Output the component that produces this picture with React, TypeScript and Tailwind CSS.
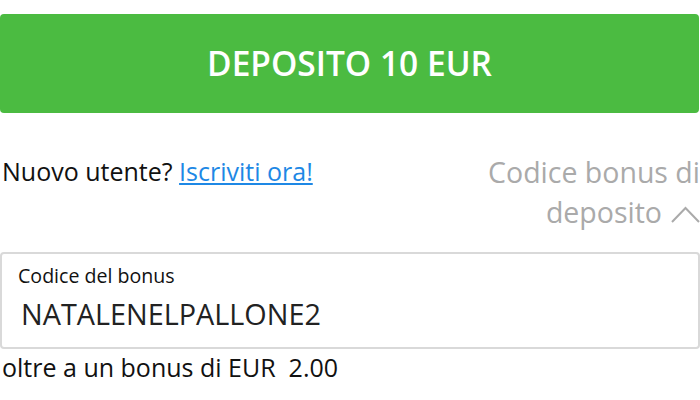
import React from "react";

export default function App() {
  return (
    <div className="w-[700px] h-[400px] bg-white overflow-hidden" style={{ fontFamily: '"Open Sans", sans-serif' }}>
      <div className="pt-[14px]">
        <button className="w-[699px] h-[99px] rounded-[4px] bg-[#4bbb41] text-white text-[33.5px] font-semibold flex items-center justify-center">
          DEPOSITO 10 EUR
        </button>
      </div>
      <div className="flex justify-between items-start mt-[36px]">
        <div className="pl-[2px] text-[25px] text-[#111] leading-[34px] mt-[5px]">
          Nuovo utente? <a className="text-[#1e88e5] underline">Iscriviti ora!</a>
        </div>
        <div className="text-right text-[28.5px] text-[#aaaaaa] leading-[40px] mt-[3px]">
          <div>Codice bonus di</div>
          <div className="flex items-center justify-end gap-[9px]">
            deposito
            <svg width="29" height="19" viewBox="0 0 29 19" fill="none" stroke="#aaaaaa" strokeWidth="2" className="mt-[2px]">
              <path d="M1 18 L14.5 4 L28 18" />
            </svg>
          </div>
        </div>
      </div>
      <div className="mt-[20px] w-[700px] h-[97px] border-2 border-[#d9d9d9] rounded-[4px] px-[16px] pt-[10px]">
        <div className="text-[19.6px] text-[#111] leading-[24px]">Codice del bonus</div>
        <div className="text-[28.8px] text-[#222] leading-[36px] pl-[3px] mt-[8px]">NATALENELPALLONE2</div>
      </div>
      <div className="pl-[2px] text-[25px] text-[#111] leading-[34px] mt-[1px]">oltre a un bonus di EUR&nbsp; 2.00</div>
    </div>
  );
}
